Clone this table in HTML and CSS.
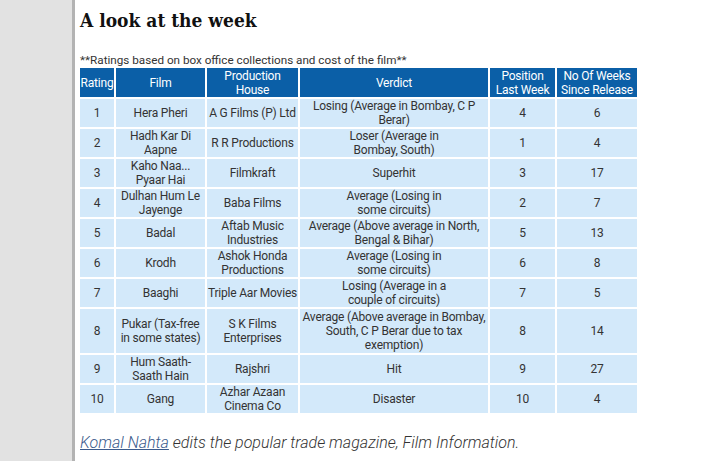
FILE: index.html
```html
<!DOCTYPE html>
<html>
<head>
<meta charset="utf-8">
<link rel="stylesheet" href="styles.css">
</head>
<body>
<div class="page">
  <div class="rail"></div>
  <main class="main">
    <h1 class="title">A look at the week</h1>
    <p class="note">**Ratings based on box office collections and cost of the film**</p>
    <table class="chart">
      <colgroup>
        <col class="c-rating"><col class="c-film"><col class="c-house"><col class="c-verdict"><col class="c-pos"><col class="c-weeks">
      </colgroup>
      <thead>
        <tr><th>Rating</th><th>Film</th><th>Production<br>House</th><th>Verdict</th><th>Position<br>Last Week</th><th>No Of Weeks<br>Since Release</th></tr>
      </thead>
      <tbody>
        <tr><td>1</td><td>Hera Pheri</td><td>A G Films (P) Ltd</td><td>Losing (Average in Bombay, C P<br>Berar)</td><td>4</td><td>6</td></tr>
        <tr><td>2</td><td>Hadh Kar Di<br>Aapne</td><td>R R Productions</td><td>Loser (Average in<br>Bombay, South)</td><td>1</td><td>4</td></tr>
        <tr><td>3</td><td>Kaho Naa...<br>Pyaar Hai</td><td>Filmkraft</td><td>Superhit</td><td>3</td><td>17</td></tr>
        <tr><td>4</td><td>Dulhan Hum Le<br>Jayenge</td><td>Baba Films</td><td>Average (Losing in<br>some circuits)</td><td>2</td><td>7</td></tr>
        <tr><td>5</td><td>Badal</td><td>Aftab Music<br>Industries</td><td>Average (Above average in North,<br>Bengal &amp; Bihar)</td><td>5</td><td>13</td></tr>
        <tr><td>6</td><td>Krodh</td><td>Ashok Honda<br>Productions</td><td>Average (Losing in<br>some circuits)</td><td>6</td><td>8</td></tr>
        <tr><td>7</td><td>Baaghi</td><td>Triple Aar Movies</td><td>Losing (Average in a<br>couple of circuits)</td><td>7</td><td>5</td></tr>
        <tr class="tall"><td>8</td><td>Pukar (Tax-free<br>in some states)</td><td>S K Films<br>Enterprises</td><td>Average (Above average in Bombay,<br>South, C P Berar due to tax<br>exemption)</td><td>8</td><td>14</td></tr>
        <tr><td>9</td><td>Hum Saath-<br>Saath Hain</td><td>Rajshri</td><td>Hit</td><td>9</td><td>27</td></tr>
        <tr><td>10</td><td>Gang</td><td>Azhar Azaan<br>Cinema Co</td><td>Disaster</td><td>10</td><td>4</td></tr>
      </tbody>
    </table>
    <p class="credit"><a class="credit-link" href="#">Komal Nahta</a> edits the popular trade magazine, Film Information.</p>
  </main>
</div>
</body>
</html>
```

FILE: styles.css
```css
html, body {
  margin: 0;
  padding: 0;
  background: #ffffff;
}
.page {
  display: flex;
  min-height: 461px;
}
.rail {
  width: 72px;
  flex: none;
  background: #e2e2e2;
  border-right: 3px solid #b3b3b3;
}
.main {
  flex: 1;
  padding: 6px 0 0 5px;
  font-family: Roboto, "Liberation Sans", sans-serif;
  color: #333;
}
.title {
  margin: 0;
  font-family: "DejaVu Serif", "Liberation Serif", serif;
  font-stretch: condensed;
  font-weight: bold;
  font-size: 19px;
  line-height: 28px;
  color: #111;
}
.note {
  margin: 19px 0 0;
  font-size: 11.7px;
  line-height: 14px;
  color: #333;
}
.chart {
  margin-top: 1px;
  border-collapse: collapse;
  width: 558px;
  table-layout: fixed;
  font-size: 12px;
  line-height: 14px;
  letter-spacing: -0.2px;
}
.c-rating { width: 35px; }
.c-film { width: 91px; }
.c-house { width: 93px; }
.c-verdict { width: 190px; }
.c-pos { width: 67px; }
.c-weeks { width: 82px; }
.chart th,
.chart td {
  border: 2px solid #ffffff;
  padding: 0;
  text-align: center;
  vertical-align: middle;
  white-space: nowrap;
}
.chart th {
  background: #0b5fa7;
  color: #ffffff;
  font-weight: normal;
  height: 28px;
  padding-top: 1px;
}
.chart thead th {
  border-top: 0;
}
.chart th:first-child,
.chart td:first-child {
  border-left: 0;
}
.chart td {
  background: #d3e9fa;
  color: #333;
  height: 28px;
}
.chart .tall td {
  height: 44px;
}
.credit {
  margin: 18px 0 0;
  font-size: 16px;
  line-height: 20px;
  font-style: italic;
  font-weight: 300;
  color: #333;
}
.credit-link {
  color: #3b5b8c;
  text-decoration: underline;
}
```
